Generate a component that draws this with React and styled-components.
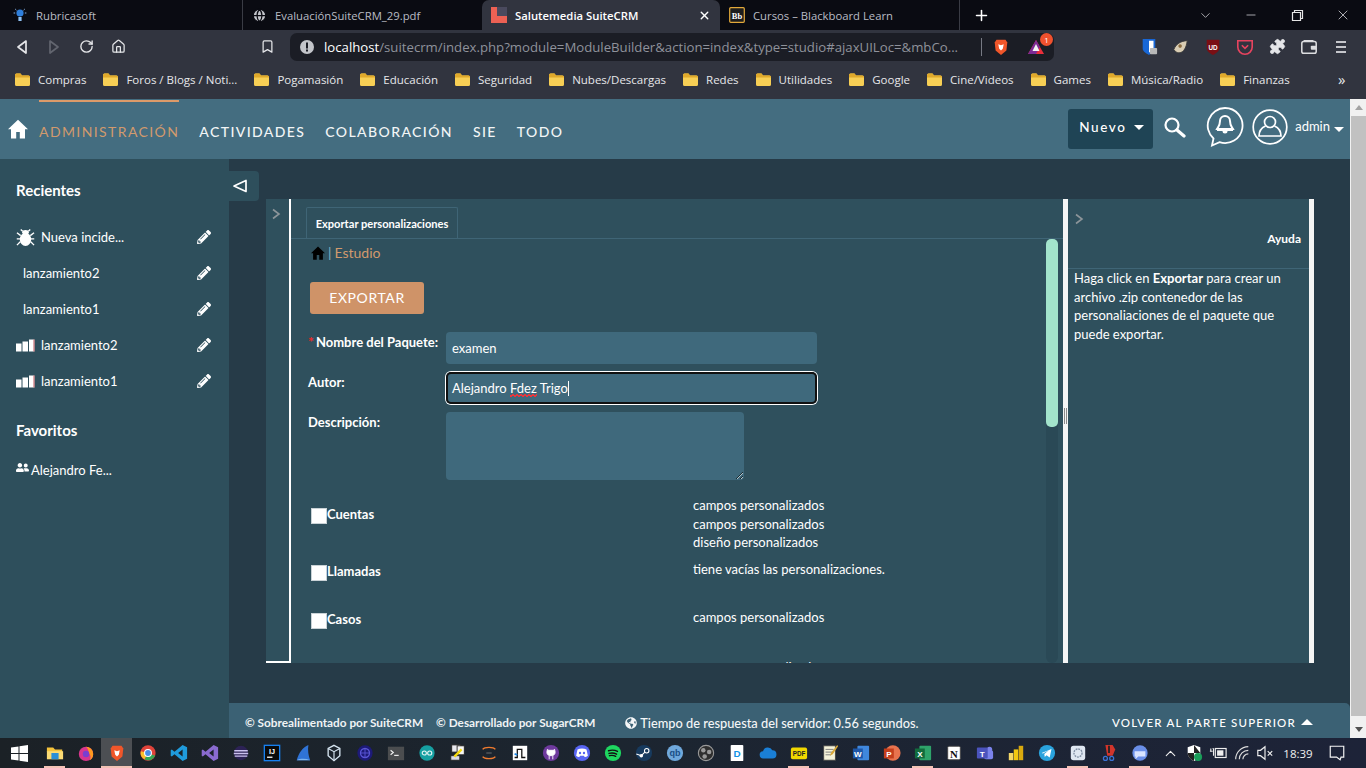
import React from 'react';
import styled, { createGlobalStyle } from 'styled-components';
import { FaPencilAlt, FaGlobeAmericas, FaUserFriends } from 'react-icons/fa';
import { RotateCw, Home, Bookmark, Puzzle, ChevronDown, Minus, X, Plus, ChevronUp, Globe } from 'lucide-react';

const Global = createGlobalStyle`
  html, body { margin: 0; padding: 0; overflow: hidden; background: #263b48; }
  * { box-sizing: border-box; }
`;
const Frame = styled.div`
  width: 1366px; height: 768px; display: flex; flex-direction: column; overflow: hidden;
  font-family: Lato, "Liberation Sans", sans-serif; color: #fff;
`;
const TabStrip = styled.div`
  height: 30px; background: #0a0b12; display: flex; align-items: stretch; padding-left: 3px;
  font-family: "Open Sans", "Noto Sans", sans-serif; font-size: 11.3px;
`;
const Tab = styled.div`
  width: ${p => p.$w}px; display: flex; align-items: center; gap: 8px; padding: 0 9px;
  position: relative; white-space: nowrap;
  color: ${p => p.$active ? '#fff' : '#b9bcc4'};
  font-weight: ${p => p.$active ? 600 : 400};
  background: ${p => p.$active ? '#31343f' : 'transparent'};
  border-radius: ${p => p.$active ? '7px 7px 0 0' : '0'};
  border-right: ${p => p.$sep ? '1px solid #3a3c45' : 'none'};
`;
const TabClose = styled.span`margin-left: auto; display: flex; color: #fff;`;
const NewTab = styled.div`width: 42px; display: flex; align-items: center; justify-content: center; color: #fff;`;
const WinControls = styled.div`margin-left: auto; display: flex; align-items: center; color: #d5d6da;`;
const WinBtn = styled.div`width: 46px; display: flex; justify-content: center;`;
const Toolbar = styled.div`
  height: 35px; background: #31343f; display: flex; align-items: center; padding: 0 0 2px 6px;
`;
const ToolBtn = styled.div`
  width: 32px; height: 28px; display: flex; align-items: center; justify-content: center; flex: none;
  color: ${p => p.$dim ? '#6b6e78' : '#e4e5e8'}; margin-left: ${p => p.$ml || 0}px;
`;
const UrlBox = styled.div`
  width: 764px; height: 28px; margin-left: 7px; background: #1b1d25; border-radius: 7px; display: flex; align-items: center;
  padding-left: 9px; flex: none;
  font-family: "Open Sans", "Noto Sans", sans-serif; font-size: 13.2px; color: #8f929b; white-space: nowrap;
`;
const UrlText = styled.span`margin-left: 9px; width: 647px; overflow: hidden;`;
const UrlHost = styled.span`color: #fff;`;
const UrlDivider = styled.span`width: 1px; height: 18px; background: #777a84; margin: 0 10px 0 10px;`;
const UrlIcon = styled.span`display: flex; width: ${p => p.$w}px; position: relative;`;
const Badge = styled.span`
  position: absolute; right: -8px; top: -6px; width: 13px; height: 13px; border-radius: 50%; background: #f0512e;
  font-size: 8px; line-height: 13px; text-align: center; color: #fff;
`;
const BookmarksBar = styled.div`
  height: 34px; background: #31343f; display: flex; align-items: center; padding: 0 0 5px 14px; gap: 16px;
  font-family: "Open Sans", "Noto Sans", sans-serif; font-size: 11.5px; color: #e6e7ea; white-space: nowrap; position: relative;
`;
const BookmarkItem = styled.div`display: flex; align-items: center; gap: 7px;`;
const More = styled.span`position: absolute; left: 1338px; top: 4px; font-size: 15px;`;
const AppArea = styled.div`height: 639px; display: flex;`;
const MainCol = styled.div`flex: 1; display: flex; flex-direction: column; min-width: 0;`;
const PageScroll = styled.div`
  width: 16px; background: #f1f1f1; display: flex; flex-direction: column; align-items: stretch; padding-left: 1px;
`;
const ScrollArrow = styled.div`height: 17px; display: flex; align-items: center; justify-content: center;`;
const Tri = styled.span`
  width: 0; height: 0; border-left: 4px solid transparent; border-right: 4px solid transparent;
  ${p => p.$up ? 'border-bottom: 5px solid #a3a3a3;' : 'border-top: 5px solid #505050;'}
`;
const PageThumb = styled.div`flex: 1; background: #c1c1c1; margin-bottom: 5px;`;
const Header = styled.header`
  height: 60px; background: #446d80; display: flex; align-items: stretch; padding-left: 8px; flex: none;
`;
const HomeLink = styled.div`width: 31px; display: flex; align-items: center; color: #fff;`;
const NavList = styled.nav`display: flex; gap: 21.4px; align-items: stretch;`;
const NavItem = styled.a`
  display: flex; align-items: center; padding-top: 1px; margin-top: 1px; font-size: 14px; font-weight: ${p => p.$active ? 400 : 500}; letter-spacing: 1.4px;
  color: ${p => p.$active ? '#d29a6d' : '#f2f5f6'};
  border-top: 2px solid ${p => p.$active ? '#dc9a69' : 'transparent'};
  margin-right: -1.4px;
`;
const HeaderRight = styled.div`margin-left: auto; display: flex; align-items: center; padding-right: 6px;`;
const NewBtn = styled.div`
  width: 85px; height: 40px; background: #1f4455; border-radius: 3px; display: flex; align-items: center; padding: 0 0 4px 11px; gap: 8px;
  font-size: 13.5px; letter-spacing: 1.6px; font-weight: 500;
`;
const CaretDown = styled.span`
  width: 0; height: 0; border-left: 5px solid transparent; border-right: 5px solid transparent; border-top: 5px solid #fff;
`;
const IconSlot = styled.span`display: flex; margin-left: ${p => p.$ml}px; margin-top: -4px;`;
const AdminName = styled.span`font-size: 13px; margin-left: 7px; margin-right: 4px; margin-top: -6px;`;
const Lower = styled.div`flex: 1; display: flex; min-height: 0;`;
const Sidebar = styled.aside`width: 229px; background: #2e4f5c; padding: 22px 16px 0; flex: none;`;
const SideTitle = styled.h3`
  margin: ${p => p.$mt}px 0 ${p => p.$mb}px; font-size: 15px; line-height: 18px; font-weight: 700;
`;
const SideRow = styled.div`
  height: 36px; display: flex; align-items: center; font-size: 13px; color: #fff; padding-left: ${p => p.$indent ? 7 : 0}px;
`;
const SideIcon = styled.span`width: 25px; display: flex; flex: none;`;
const SideEdit = styled.span`margin-left: auto; margin-right: 2px; display: flex;`;
const FavIcon = styled.span`display: flex; margin-right: 2px; margin-top: -5px;`;
const Content = styled.main`flex: 1; display: flex; flex-direction: column; min-width: 0; background: #263b48;`;
const Stage = styled.div`flex: 1; padding: 40px 0 40px 37px; position: relative; min-height: 0;`;
const Toggle = styled.div`
  position: absolute; left: 0; top: 12px; width: 30px; height: 30px; background: #2e4f5c; border-radius: 0 4px 4px 0;
  display: flex; align-items: center; padding-left: 3px;
`;
const Studio = styled.div`width: 1048px; height: 464px; display: flex; background: #2f505d;`;
const LeftStrip = styled.div`
  width: 25px; border-right: 2px solid #fff; border-bottom: 2px solid #fff; padding: 5px 0 0 5px; flex: none;
`;
const Body = styled.div`width: 772px; display: flex; flex-direction: column; flex: none;`;
const TabsBar = styled.div`
  height: 40px; padding: 8px 0 0 15px; border-bottom: 1px solid #3f6576; flex: none;
`;
const PanelTab = styled.div`
  width: 152px; height: 32px; border: 1px solid #3f6576; border-bottom: none; border-radius: 2px 2px 0 0;
  display: flex; align-items: center; justify-content: center; font-size: 11.1px; font-weight: 700; white-space: nowrap;
`;
const BodyRow = styled.div`flex: 1; display: flex; min-height: 0;`;
const Scroller = styled.div`flex: 1; overflow: hidden; min-width: 0;`;
const Crumb = styled.div`height: 27px; padding-left: 20px; display: flex; align-items: center; font-size: 14px; color: #d29a6d; gap: 3px;`;
const CrumbSep = styled.span`color: #7fb0c8; margin-right: 0;`;
const ExportBtn = styled.div`
  margin: 16px 0 18px 19px; width: 114px; height: 32px; background: #cf9368; border-radius: 3px; font-size: 14px; letter-spacing: .6px;
  display: flex; align-items: center; justify-content: center; padding-bottom: 1px;
`;
const FieldRow = styled.div`display: grid; grid-template-columns: 138px auto; padding-left: 17px; margin-bottom: 8px; align-items: start;`;
const FieldLabel = styled.label`font-size: 13px; font-weight: 700; line-height: 20px; white-space: nowrap;`;
const Req = styled.span`color: #f02a2a; font-weight: 700; font-size: 14px; margin-right: 2px;`;
const TextField = styled.div`
  width: 371px; height: 32px; background: #3f697c; border-radius: 4px; font-size: 13px; padding: 0 6px; display: flex; align-items: center; white-space: pre;
  ${p => p.$focus && 'box-shadow: 0 0 0 1px #fff, inset 0 0 0 2px #111; border-radius: 5px;'}
`;
const FieldText = styled.span``;
const Miss = styled.span`
  position: relative;
  &::after {
    content: ''; position: absolute; left: 0; right: 0; bottom: -1px; height: 3px;
    background:
      linear-gradient(135deg, transparent 40%, #e8363c 40% 62%, transparent 62%) 0 0 / 4px 3px repeat-x,
      linear-gradient(45deg, transparent 40%, #e8363c 40% 62%, transparent 62%) 2px 0 / 4px 3px repeat-x;
  }
`;
const Caret = styled.span`width: 1px; height: 15px; background: #fff;`;
const AreaField = styled.textarea`
  display: block; width: 298px; height: 68px; background: #3f697c; border: none; border-radius: 4px; resize: both; margin: 0; outline: none; color: #fff;
`;
const ModuleRow = styled.div`
  display: grid; grid-template-columns: 382px auto; min-height: 48px; padding: 0 0 8.5px 20px; margin-top: ${p => p.$mt || 0}px;
`;
const ModuleName = styled.div`
  display: flex; align-items: center; font-size: 13px; font-weight: 700; height: 18px; margin-top: ${p => p.$lift ? 9 : 2}px;
`;
const Check = styled.input.attrs({ type: 'checkbox', readOnly: true })`
  appearance: none; width: 16px; height: 16px; margin: 3px 0 0; background: #fff; border: 1px solid #c9d2d6; flex: none;
`;
const ModuleNotes = styled.div`font-size: 13px; line-height: 18.5px;`;
const Track = styled.div`width: 12px; margin: 0 5px 0 0; background: #2a4956; border-radius: 6px; flex: none;`;
const Thumb = styled.div`height: 188px; background: #a3e4cc; border-radius: 5px;`;
const Splitter = styled.div`width: 5px; background: #f5f5f5; flex: none; display: flex; align-items: center; justify-content: center; padding-bottom: 30px;`;
const Grip = styled.span`width: 3px; height: 16px; border-left: 1px solid #8a8a8a; border-right: 1px solid #8a8a8a;`;
const HelpPanel = styled.div`width: 241px; display: flex; flex-direction: column; flex: none; border-right: 0;`;
const HelpHead = styled.div`
  height: 70px; border-bottom: 1px solid #3f6576; padding: 14px 8px 0 6px; flex: none; display: flex; flex-direction: column;
`;
const HelpTitle = styled.div`font-size: 12px; font-weight: 700; text-align: right; margin-top: 6px;`;
const HelpText = styled.div`font-size: 13px; line-height: 18.6px; padding: 0 8px 0 6px;`;
const RightEdge = styled.div`width: 5px; background: #f5f5f5; flex: none;`;
const Footer = styled.footer`
  height: 35px; background: #3b6174; border-radius: 0 5px 0 0; display: flex; align-items: center; padding: 4px 37px 0 16px; flex: none; white-space: nowrap;
`;
const Credit = styled.span`font-size: 11.8px; font-weight: 700; margin-right: ${p => p.$mr}px; color: #f0f3f4;`;
const Timing = styled.span`font-size: 12.8px; display: flex; align-items: center; gap: 3px; color: #f4f6f7; font-weight: 500;`;
const BackTop = styled.span`margin-left: auto; font-size: 11.5px; letter-spacing: 1.2px; display: flex; align-items: center; gap: 5px; font-weight: 500;`;
const UpTri = styled.span`width: 0; height: 0; border-left: 6px solid transparent; border-right: 6px solid transparent; border-bottom: 6px solid #fff; margin-bottom: 2px;`;
const Taskbar = styled.div`
  height: 30px; flex: none; background: linear-gradient(90deg, #1b2126 0%, #1c2530 45%, #1d2338 100%); display: flex; align-items: center; position: relative;
`;
const StartBtn = styled.div`width: 38px; flex: none; display: flex; justify-content: center; margin-right: 1px;`;
const TaskBtn = styled.div`
  width: 31px; height: 30px; display: flex; align-items: center; justify-content: center; position: relative; flex: none;
  background: ${p => p.$active ? '#4c4f53' : 'transparent'};
  &::after { content: ''; position: absolute; bottom: 0; left: ${p => p.$active ? 0 : 5}px; right: ${p => p.$active ? 0 : 5}px; height: 2px; background: ${p => (p.$open || p.$active) ? '#f3c2b5' : 'transparent'}; }
`;
const Tray = styled.div`
  margin-left: 3px; display: flex; align-items: center; color: #f0f0f0; flex: none;
`;
const TraySlot = styled.span`width: ${p => p.$w}px; display: flex; justify-content: center; flex: none;`;
const Clock = styled.span`width: 38px; font-family: "Open Sans", "Noto Sans", sans-serif; font-size: 11.5px; text-align: center; margin: 0 3px 0 3px;`;

const Folder = () => (
  <svg width="17" height="15" viewBox="0 0 17 15"><path d="M1 3a1.5 1.5 0 0 1 1.5-1.5h4L8 3.5h6.5A1.5 1.5 0 0 1 16 5v7.5a1.5 1.5 0 0 1-1.5 1.5h-12A1.5 1.5 0 0 1 1 12.5z" fill="#f7cf55"/><path d="M1 5.5h15V5a1.5 1.5 0 0 0-1.5-1.5H8L6.5 1.5h-4A1.5 1.5 0 0 0 1 3z" fill="#e0a92b"/></svg>
);
const S = ({ w = 18, h = 18, vb = '0 0 20 20', children }) => <svg width={w} height={h} viewBox={vb}>{children}</svg>;
const T = ({ x = 10, y = 14.5, s = 12, c = '#fff', w = 700, f = 'Liberation Sans', children }) => (
  <text x={x} y={y} fontSize={s} fill={c} fontWeight={w} fontFamily={f} textAnchor="middle">{children}</text>
);
const House = ({ size, color }) => (
  <S w={size} h={size}><path d="M10 .8 0 10.300h3V19.500h5.200v-6.500h3.600v6.500H17V10.300h3z" fill={color}/></S>
);

const pencil = <FaPencilAlt size={14} color="#fff" />;
const bars = (
  <S w={19} h={13} vb="0 0 19 13"><rect y="4.500" width="5.500" height="8" fill="#fff"/><rect x="6.500" y="2.500" width="5.500" height="10" fill="#fff"/><rect x="13" y=".5" width="5.500" height="12" fill="#fff"/><rect x="17.500" y=".5" width="1" height="12" fill="#c0545c"/></S>
);
const bug = (
  <S w={19} h={19}><ellipse cx="10" cy="12" rx="6" ry="7" fill="#fff"/><ellipse cx="10" cy="4.500" rx="3.500" ry="2.300" fill="#fff"/><path d="M5 1.500 7 3.500M15 1.500 13 3.500M1 5l4 3M19 5l-4 3M.8 11.500H4.500M19.200 11.500H15.500M1 18l3.500-3.500M19 18l-3.500-3.500" stroke="#fff" strokeWidth="1.400" fill="none"/></S>
);
const chevronMark = (
  <S w={10} h={12} vb="0 0 10 12"><path d="M2 1.500 8 6l-6 4.500" fill="none" stroke="#8d959a" strokeWidth="1.600"/></S>
);

const bookmarks = ['Compras', 'Foros / Blogs / Noti...', 'Pogamasión', 'Educación', 'Seguridad', 'Nubes/Descargas', 'Redes', 'Utilidades', 'Google', 'Cine/Videos', 'Games', 'Música/Radio', 'Finanzas'];
const nav = ['ACTIVIDADES', 'COLABORACIÓN', 'SIE', 'TODO'];

const brave = (sz = 18) => (
  <S w={sz} h={sz}><path d="M5 2h10l2 3-1 9-6 5-6-5-1-9z" fill="#f0562a"/><path d="M7 7l3 1 3-1-1 5-2 2-2-2z" fill="#fff"/></S>
);
const taskIcons = [
  { open: true, i: <S><path d="M1 4h7l2 2h8v3H1z" fill="#f5c33b"/><rect x="1" y="8" width="18" height="9" fill="#fbdb74"/><rect x="6" y="10" width="8" height="7" fill="#2a8fd8"/></S> },
  { i: <S><circle cx="10" cy="11" r="8" fill="#d9358d"/><path d="M10 3a8 8 0 0 1 8 8c0 4-2 6-4 7 2-3 1-6-1-8 0-3-1-5-3-7z" fill="#ff9a1f"/><circle cx="10" cy="11" r="3.6" fill="#7a3fd0"/></S> },
  { active: true, i: brave() },
  { i: <S><circle cx="10" cy="10" r="8.5" fill="#e0433a"/><path d="M10 10 18 13a8.500 8.500 0 0 1-12 4z" fill="#35a853"/><path d="M10 10 6 17a8.500 8.500 0 0 1-4-9z" fill="#fbc02d"/><circle cx="10" cy="10" r="3.8" fill="#4a8ee8" stroke="#fff" strokeWidth="1.2"/></S> },
  { i: <S><path d="M14 1l5 2.500v13L14 19 5 11.500 2 14 .8 13V7L2 6l3 2.500zM14 6l-5 4 5 4z" fill="#1f9bdc"/></S> },
  { i: <S><path d="M14 1l5 2.500v13L14 19 5 11.500 2 14 .8 13V7L2 6l3 2.500zM14 6l-5 4 5 4z" fill="#8a6bd0"/></S> },
  { i: <S><circle cx="10" cy="10" r="8" fill="#2c2255"/><path d="M2.500 7.500h15M2 10.500h16M3 13.500h14" stroke="#cbc2ef" strokeWidth="1.6"/></S> },
  { i: <S><rect x="1.500" y="1.500" width="17" height="17" fill="#0a0a0a" stroke="#1680f0" strokeWidth="1.500"/><T y="11" s={8}>IJ</T><rect x="4.500" y="14" width="6" height="1.400" fill="#fff"/></S> },
  { i: <S><path d="M3 18C5 10 10 3 16 1c-1 5 0 12 2 17z" fill="#2f73d6"/><path d="M3 18c4-2 10-2 15 0z" fill="#7cb4ef"/></S> },
  { i: <S><path d="M10 1.500 16.500 5v8L10 18.500 3.500 13V5z" fill="none" stroke="#d5e4f0" strokeWidth="1.500"/><path d="M3.500 5 10 8.500 16.500 5M10 8.500v10" fill="none" stroke="#d5e4f0" strokeWidth="1.300"/></S> },
  { i: <S><circle cx="10" cy="10" r="8.500" fill="#1d1a78"/><circle cx="10" cy="10" r="5" fill="none" stroke="#5a55d6" strokeWidth="1.500"/><path d="M5 10h10M10 5v10" stroke="#5a55d6" strokeWidth="1"/></S> },
  { i: <S><rect x="1" y="3" width="18" height="15" fill="#4b4d4f"/><path d="M4 7l3 2.500L4 12" fill="none" stroke="#eee" strokeWidth="1.300"/><rect x="8" y="12" width="5" height="1.300" fill="#eee"/></S> },
  { i: <S><circle cx="10" cy="10" r="8.500" fill="#16a0a2"/><circle cx="7" cy="10" r="2.300" fill="none" stroke="#e6f5f5" strokeWidth="1.200"/><circle cx="13" cy="10" r="2.300" fill="none" stroke="#e6f5f5" strokeWidth="1.200"/></S> },
  { i: <S><rect x="3" y="1" width="10" height="8" fill="#e8e8ee" stroke="#222"/><rect x="9" y="2" width="8" height="10" fill="#f5f5f5" stroke="#222"/><rect x="2" y="13" width="10" height="5" fill="#dbdbe6" stroke="#222"/><path d="M6 14 14 6" stroke="#f4d80a" strokeWidth="2.500"/></S> },
  { i: <S><path d="M3 6c2-3 12-3 14 0" fill="none" stroke="#ef7a2e" strokeWidth="1.600"/><path d="M3 14c2 3 12 3 14 0" fill="none" stroke="#ef7a2e" strokeWidth="1.600"/><path d="M7 10h6" stroke="#777" strokeWidth="1"/></S> },
  { i: <S><rect x="2" y="2" width="16" height="16" fill="#fff"/><path d="M4 15h3V6h5v9h4" fill="none" stroke="#111" strokeWidth="1.400"/><path d="M4 11l3 1" stroke="#1e88e5" strokeWidth="2"/></S> },
  { i: <S><circle cx="10" cy="10" r="9" fill="#6e3a9d"/><path d="M6 6l1.500 1h5L14 6l.6 3c0 3-2 4-4.600 4S5.400 12 5.400 9zM8 13v4M12 13v4" fill="#fff" stroke="#fff" strokeWidth="1"/></S> },
  { i: <S><circle cx="10" cy="10" r="9" fill="#5865f2"/><path d="M5 6c3-1.500 7-1.500 10 0l1.500 7c-1 1-2.500 1.500-3.500 1.500l-1-1.500H8l-1 1.500c-1 0-2.500-.5-3.500-1.500z" fill="#fff"/><circle cx="7.800" cy="10" r="1.300" fill="#5865f2"/><circle cx="12.200" cy="10" r="1.300" fill="#5865f2"/></S> },
  { i: <S><circle cx="10" cy="10" r="9" fill="#1ed760"/><path d="M5 7.500c3.500-1 7-.8 10 .8M5.500 10.500c3-.8 6-.5 8.500 .8M6 13c2.500-.6 5-.4 7 .7" fill="none" stroke="#111" strokeWidth="1.500" strokeLinecap="round"/></S> },
  { i: <S><circle cx="10" cy="10" r="9" fill="#173a5e"/><circle cx="13" cy="7.500" r="2.500" fill="none" stroke="#fff" strokeWidth="1.200"/><circle cx="7" cy="13" r="2" fill="#fff"/><path d="M1.500 11 7 13l4-4" stroke="#fff" strokeWidth="1.200" fill="none"/></S> },
  { i: <S><circle cx="10" cy="10" r="9" fill="#6fa8dc"/><T y="13.500" s={10} c="#1a4f86">qb</T></S> },
  { i: <S><circle cx="10" cy="10" r="8.500" fill="#2f2f2f" stroke="#9a9a9a" strokeWidth="1.200"/><circle cx="7" cy="7" r="2.500" fill="#9a9a9a"/><circle cx="13.500" cy="9" r="2.500" fill="#9a9a9a"/><circle cx="8.500" cy="14" r="2.500" fill="#9a9a9a"/></S> },
  { i: <S><rect x="3" y="1" width="14" height="18" rx="1" fill="#fff"/><T y="14" s={11} c="#1292e6">D</T></S> },
  { i: <S><path d="M5 16a4 4 0 0 1-.5-8 5.500 5.500 0 0 1 10.300-1 4.500 4.500 0 0 1 .2 9z" fill="#1a7fd6"/></S> },
  { open: true, i: <S><rect x="1" y="4" width="18" height="13" rx="2" fill="#f1d800"/><T y="13.500" s={7} c="#222">PDF</T></S> },
  { i: <S><rect x="3" y="2" width="13" height="16" fill="#f5f3da" stroke="#444"/><path d="M5 6h9M5 9h9M5 12h6" stroke="#777"/><path d="M18 1l-7 9-1 3 3-1.500 6-9z" fill="#d9a838"/></S> },
  { i: <S><rect x="6" y="2" width="13" height="16" rx="1" fill="#3f87dd"/><rect x="1" y="5" width="11" height="11" fill="#1d56a8"/><T x={6.500} y={14} s={9}>W</T></S> },
  { i: <S><circle cx="11" cy="10" r="8.500" fill="#e8734e"/><rect x="1" y="5" width="11" height="11" fill="#c43e1c"/><T x={6.500} y={14} s={9}>P</T></S> },
  { open: true, i: <S><rect x="6" y="2" width="13" height="16" rx="1" fill="#2ea36a"/><rect x="1" y="5" width="11" height="11" fill="#126b3c"/><T x={6.500} y={14} s={9}>X</T></S> },
  { i: <S><rect x="3" y="2.500" width="14" height="15" rx="1.500" fill="#fff" stroke="#444"/><T y="15" s={12} c="#111" f="Liberation Serif">N</T></S> },
  { i: <S><circle cx="15" cy="6" r="3" fill="#7b83eb"/><rect x="9" y="7" width="10" height="10" rx="2" fill="#7b83eb"/><rect x="1" y="4" width="12" height="12" rx="1" fill="#4b53bc"/><T x={7} y={14} s={9}>T</T></S> },
  { i: <S><rect x="2" y="10" width="5" height="8" fill="#f5d867"/><rect x="7.500" y="6" width="5" height="12" fill="#f2c811"/><rect x="13" y="2" width="5" height="16" fill="#d9a90e"/></S> },
  { i: <S><circle cx="10" cy="10" r="9" fill="#2aa3dd"/><path d="M4 10l11-4.500-2 9.500-3.500-2.500-2 2-.5-3.500 5-4-6.500 3.500z" fill="#fff"/></S> },
  { open: true, i: <S><rect x="2" y="2" width="16" height="16" rx="3" fill="#dfe7f2"/><circle cx="10" cy="10" r="4.500" fill="none" stroke="#7f8ea3" strokeWidth="1.500" strokeDasharray="2 1"/></S> },
  { i: <S><path d="M6 1h8l3 5-3 7H8z" fill="#d1352b"/><path d="M10 2v8" stroke="#222" strokeWidth="2"/><circle cx="6" cy="16" r="2.200" fill="none" stroke="#3a72d6" strokeWidth="1.400"/><circle cx="13" cy="16" r="2.200" fill="none" stroke="#3a72d6" strokeWidth="1.400"/></S> },
  { open: true, i: <S><circle cx="10" cy="10" r="8.500" fill="#6a8fe8"/><path d="M4 8h12v6H8l-3 3v-3H4z" fill="#d9e4ff"/></S> },
];

function App() {
  return (
    <Frame>
      <Global />
      <TabStrip>
        <Tab $w={240} $sep>
          <S w={16} h={16}><circle cx="10" cy="7.500" r="4.500" fill="#2f7fdc"/><rect x="8" y="12.500" width="4" height="5" fill="#8fc0f2"/><path d="M2 7.500h2M16 7.500h2M4 2.500l1.500 1.500M16 2.500 14.500 4" stroke="#8fb8e8" strokeWidth="1.200"/></S>
          <span>Rubricasoft</span>
        </Tab>
        <Tab $w={239}>
          <Globe size={15} color="#0a0b12" fill="#c4c6cc" />
          <span>EvaluaciónSuiteCRM_29.pdf</span>
        </Tab>
        <Tab $w={238} $active>
          <S w={16} h={16} vb="0 0 16 16"><rect width="16" height="16" fill="#ec6154"/><rect x="6" width="10" height="9" fill="#4a4a5e"/></S>
          <span>Salutemedia SuiteCRM</span>
          <TabClose><X size={13} strokeWidth={2.500} /></TabClose>
        </Tab>
        <Tab $w={240} $sep>
          <S w={16} h={16} vb="0 0 16 16"><rect x=".7" y=".7" width="14.600" height="14.600" rx="1" fill="#1d1d1d" stroke="#e3a93a" strokeWidth="1.200"/><T x={8} y={11.500} s={8.500} f="Liberation Serif">Bb</T></S>
          <span>Cursos – Blackboard Learn</span>
        </Tab>
        <NewTab><Plus size={17} strokeWidth={2.200} /></NewTab>
        <WinControls>
          <WinBtn><ChevronDown size={15} strokeWidth={1.200} /></WinBtn>
          <WinBtn><Minus size={14} strokeWidth={1.300} /></WinBtn>
          <WinBtn>
            <S w={13} h={13} vb="0 0 13 13"><path d="M3.500 3V1.500h8v8H10M1.500 3.500h8v8h-8z" fill="none" stroke="#e5e5e5" strokeWidth="1.200"/></S>
          </WinBtn>
          <WinBtn><X size={16} strokeWidth={1.200} /></WinBtn>
        </WinControls>
      </TabStrip>

      <Toolbar>
        <ToolBtn><S w={16} h={16} vb="0 0 16 16"><path d="M12 2 4 8l8 6z" fill="none" stroke="#e4e5e8" strokeWidth="1.700" strokeLinejoin="round"/></S></ToolBtn>
        <ToolBtn><S w={16} h={16} vb="0 0 16 16"><path d="M4 2l8 6-8 6z" fill="none" stroke="#62656f" strokeWidth="1.700" strokeLinejoin="round"/></S></ToolBtn>
        <ToolBtn><RotateCw size={15} strokeWidth={2.200} /></ToolBtn>
        <ToolBtn><Home size={15} strokeWidth={2} /></ToolBtn>
        <ToolBtn $ml={117}><Bookmark size={15} strokeWidth={2} /></ToolBtn>
        <UrlBox>
          <S w={16} h={16} vb="0 0 16 16"><circle cx="8" cy="8" r="7" fill="#c3c5ca"/><rect x="7" y="3.500" width="2" height="6" fill="#1b1d25"/><rect x="7" y="10.500" width="2" height="2" fill="#1b1d25"/></S>
          <UrlText><UrlHost>localhost</UrlHost>/suitecrm/index.php?module=ModuleBuilder&amp;action=index&amp;type=studio#ajaxUILoc=&amp;mbCo...</UrlText>
          <UrlDivider />
          <UrlIcon $w={35}>{brave(18)}</UrlIcon>
          <UrlIcon $w={18}>
            <S w={18} h={16} vb="0 0 18 16"><path d="M9 1l8 14H1z" fill="#e92e3a"/><path d="M9 1l4 7-4 7H1z" fill="#7b2a95"/><path d="M9 5l3.500 7h-7z" fill="#f4f4f4"/></S>
            <Badge>1</Badge>
          </UrlIcon>
        </UrlBox>
        <ToolBtn $ml={79}><S><path d="M3 1h14v11c0 3-4 5-7 7-3-2-7-4-7-7z" fill="#1867d6"/><path d="M10 3h5v8c0 2-3 4-5 5z" fill="#fff"/><rect x="11" y="11" width="8" height="7" rx="1" fill="#b8b8b8"/></S></ToolBtn>
        <ToolBtn><S><path d="M2 13c2-6 8-10 15-10-1 4-1 7-4 11-3 3-7 3-9 1z" fill="#d9cdb4" stroke="#3a3a3a"/><circle cx="9" cy="9" r="2" fill="#8a6b3e"/></S></ToolBtn>
        <ToolBtn><S><path d="M3 2h14v9c0 4-4 6-7 8-3-2-7-4-7-8z" fill="#7a0f14"/><T y={13} s={7}>UD</T></S></ToolBtn>
        <ToolBtn><S><path d="M2 3h16v7a8 8 0 0 1-16 0z" fill="none" stroke="#e7445f" strokeWidth="1.800"/><path d="M6.500 8 10 11.500 13.500 8" fill="none" stroke="#e7445f" strokeWidth="1.800"/></S></ToolBtn>
        <ToolBtn><Puzzle size={17} fill="#e4e5e8" strokeWidth={1} /></ToolBtn>
        <ToolBtn><S><rect x="2" y="4" width="16" height="13" rx="2" fill="none" stroke="#dcdde0" strokeWidth="1.700"/><path d="M4 3h11" stroke="#dcdde0" strokeWidth="1.500"/><rect x="12" y="8.500" width="6" height="4.500" rx="1" fill="#dcdde0"/></S></ToolBtn>
        <ToolBtn><S w={14} h={16} vb="0 0 14 16"><path d="M2 3h10M2 8h10M2 13h10" stroke="#c5c6cb" strokeWidth="2"/></S></ToolBtn>
      </Toolbar>

      <BookmarksBar>
        {bookmarks.map(b => (
          <BookmarkItem key={b}><Folder /><span>{b}</span></BookmarkItem>
        ))}
        <More>»</More>
      </BookmarksBar>

      <AppArea>
        <MainCol>
          <Header>
            <HomeLink><House size={20} color="#fff" /></HomeLink>
            <NavList>
              <NavItem $active>ADMINISTRACIÓN</NavItem>
              {nav.map(n => <NavItem key={n}>{n}</NavItem>)}
            </NavList>
            <HeaderRight>
              <NewBtn>Nuevo<CaretDown /></NewBtn>
              <IconSlot $ml={9}>
                <S w={24} h={24} vb="0 0 24 24"><circle cx="10" cy="10" r="6.500" fill="none" stroke="#fff" strokeWidth="2.200"/><path d="M15 15l7 6" stroke="#fff" strokeWidth="3.200" strokeLinecap="round"/></S>
              </IconSlot>
              <IconSlot $ml={20}>
                <S w={38} h={42} vb="0 0 38 42"><path d="M19 2a17.500 17.500 0 1 1-5.500 34.100L6 39.500l1.500-7A17.500 17.500 0 0 1 19 2z" fill="none" stroke="#fff" strokeWidth="1.800"/><path d="M19 10a5 5 0 0 1 5 5c0 5 2 6 3 8H11c1-2 3-3 3-8a5 5 0 0 1 5-5z" fill="none" stroke="#fff" strokeWidth="2"/><path d="M16.500 25a2.500 2.500 0 0 0 5 0z" fill="#fff"/><path d="M11 23h16v2H11z" fill="#fff"/></S>
              </IconSlot>
              <IconSlot $ml={8}>
                <S w={36} h={36} vb="0 0 36 36"><circle cx="18" cy="18" r="16.800" fill="none" stroke="#fff" strokeWidth="1.700"/><circle cx="18" cy="13" r="5.500" fill="none" stroke="#fff" strokeWidth="1.700"/><path d="M13.500 17C9 19 7 23 7 27h22c0-4-2-8-6.500-10" fill="none" stroke="#fff" strokeWidth="1.700"/></S>
              </IconSlot>
              <AdminName>admin</AdminName>
              <CaretDown />
            </HeaderRight>
          </Header>
          <Lower>
            <Sidebar>
              <SideTitle $mt={0} $mb={20}>Recientes</SideTitle>
              <SideRow><SideIcon>{bug}</SideIcon>Nueva incide...<SideEdit>{pencil}</SideEdit></SideRow>
              <SideRow $indent>lanzamiento2<SideEdit>{pencil}</SideEdit></SideRow>
              <SideRow $indent>lanzamiento1<SideEdit>{pencil}</SideEdit></SideRow>
              <SideRow><SideIcon>{bars}</SideIcon>lanzamiento2<SideEdit>{pencil}</SideEdit></SideRow>
              <SideRow><SideIcon>{bars}</SideIcon>lanzamiento1<SideEdit>{pencil}</SideEdit></SideRow>
              <SideTitle $mt={22} $mb={13}>Favoritos</SideTitle>
              <SideRow><FavIcon><FaUserFriends size={13} /></FavIcon>Alejandro Fe...</SideRow>
            </Sidebar>
            <Content>
              <Stage>
                <Toggle>
                  <S w={16} h={14} vb="0 0 16 14"><path d="M14 1.500v11L2 7z" fill="none" stroke="#fff" strokeWidth="1.700" strokeLinejoin="round"/></S>
                </Toggle>
                <Studio>
                  <LeftStrip>{chevronMark}</LeftStrip>
                  <Body>
                    <TabsBar><PanelTab>Exportar personalizaciones</PanelTab></TabsBar>
                    <BodyRow>
                      <Scroller>
                        <Crumb><House size={14} color="#000" /><CrumbSep>|</CrumbSep>Estudio</Crumb>
                        <ExportBtn>EXPORTAR</ExportBtn>
                        <FieldRow>
                          <FieldLabel><Req>*</Req>Nombre del Paquete:</FieldLabel>
                          <TextField>examen</TextField>
                        </FieldRow>
                        <FieldRow>
                          <FieldLabel>Autor:</FieldLabel>
                          <TextField $focus><FieldText>Alejandro <Miss>Fdez</Miss> Trigo</FieldText><Caret /></TextField>
                        </FieldRow>
                        <FieldRow>
                          <FieldLabel>Descripción:</FieldLabel>
                          <AreaField readOnly />
                        </FieldRow>
                        <ModuleRow $mt={16}>
                          <ModuleName $lift><Check />Cuentas</ModuleName>
                          <ModuleNotes>campos personalizados<br />campos personalizados<br />diseño personalizados</ModuleNotes>
                        </ModuleRow>
                        <ModuleRow>
                          <ModuleName><Check />Llamadas</ModuleName>
                          <ModuleNotes>tiene vacías las personalizaciones.</ModuleNotes>
                        </ModuleRow>
                        <ModuleRow>
                          <ModuleName><Check />Casos</ModuleName>
                          <ModuleNotes>campos personalizados</ModuleNotes>
                        </ModuleRow>
                        <ModuleRow $mt={2}>
                          <div />
                          <ModuleNotes>campos personalizados</ModuleNotes>
                        </ModuleRow>
                      </Scroller>
                      <Track><Thumb /></Track>
                    </BodyRow>
                  </Body>
                  <Splitter><Grip /></Splitter>
                  <HelpPanel>
                    <HelpHead>
                      {chevronMark}
                      <HelpTitle>Ayuda</HelpTitle>
                    </HelpHead>
                    <HelpText>Haga click en <b>Exportar</b> para crear un archivo .zip contenedor de las personaliaciones de el paquete que puede exportar.</HelpText>
                  </HelpPanel>
                  <RightEdge />
                </Studio>
              </Stage>
              <Footer>
                <Credit $mr={13}>© Sobrealimentado por SuiteCRM</Credit>
                <Credit $mr={30}>© Desarrollado por SugarCRM</Credit>
                <Timing><FaGlobeAmericas size={12} />Tiempo de respuesta del servidor: 0.56 segundos.</Timing>
                <BackTop>VOLVER AL PARTE SUPERIOR<UpTri /></BackTop>
              </Footer>
            </Content>
          </Lower>
        </MainCol>
        <PageScroll>
          <ScrollArrow><Tri $up /></ScrollArrow>
          <PageThumb />
          <ScrollArrow><Tri /></ScrollArrow>
        </PageScroll>
      </AppArea>

      <Taskbar>
        <StartBtn>
          <S w={17} h={17} vb="0 0 17 17"><path d="M0 2.500 7.500 1.400V8H0zM8.500 1.300 17 0v8H8.500zM0 9h7.500v6.600L0 14.500zM8.500 9H17v8l-8.500-1.300z" fill="#fff"/></S>
        </StartBtn>
        {taskIcons.map((t, n) => (
          <TaskBtn key={n} $active={t.active} $open={t.open}>{t.i}</TaskBtn>
        ))}
        <Tray>
          <TraySlot $w={24}><ChevronUp size={17} strokeWidth={1.500} /></TraySlot>
          <TraySlot $w={24}><S><path d="M10 1l7 2.500V10c0 4-3 7-7 9-4-2-7-5-7-9V3.500z" fill="#fff"/><path d="M10 1v18c-4-2-7-5-7-9h14" fill="#222"/><circle cx="14.500" cy="14.500" r="4.500" fill="#1b9e5a"/></S></TraySlot>
          <TraySlot $w={24}><S><path d="M1 8h3M5 5v8M2 5v3M4 5h1" stroke="#eee" strokeWidth="1.200"/><rect x="7" y="5" width="12" height="10" fill="none" stroke="#eee" strokeWidth="1.300"/><rect x="9" y="7" width="7" height="6" fill="#eee"/></S></TraySlot>
          <TraySlot $w={24}><S><path d="M3 17a14 14 0 0 1 14-14M7 17a10 10 0 0 1 10-10M11 17a6 6 0 0 1 6-6" fill="none" stroke="#dcdcdc" strokeWidth="1.300"/></S></TraySlot>
          <TraySlot $w={22}><S><path d="M2 7h3l5-4v14l-5-4H2z" fill="none" stroke="#eee" strokeWidth="1.300"/><path d="M13 8l5 5M18 8l-5 5" stroke="#eee" strokeWidth="1.300"/></S></TraySlot>
          <Clock>18:39</Clock>
          <TraySlot $w={34}><S><path d="M2.500 2.500h15v12h-3l-1 3-4-3h-7z" fill="none" stroke="#f5f5f5" strokeWidth="1.300"/></S></TraySlot>
        </Tray>
      </Taskbar>
    </Frame>
  );
}

export default App;
